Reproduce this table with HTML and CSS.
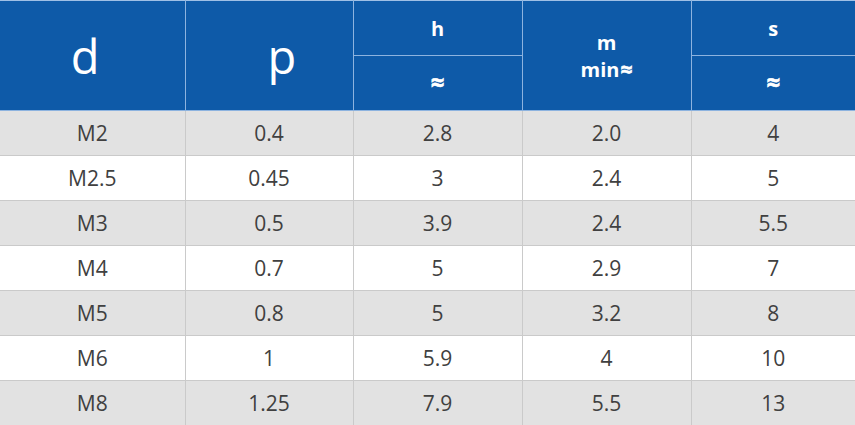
FILE: index.html
```html
<!DOCTYPE html>
<html>
<head>
<meta charset="utf-8">
<link rel="stylesheet" href="styles.css">
</head>
<body>
<table class="spec">
  <colgroup>
    <col class="c1"><col class="c2"><col class="c3"><col class="c4"><col class="c5">
  </colgroup>
  <thead>
    <tr class="h1">
      <th rowspan="2" class="big big-d">d</th>
      <th rowspan="2" class="big big-p">p</th>
      <th>h</th>
      <th rowspan="2" class="two">m<br>min<span class="approx small">≈</span></th>
      <th>s</th>
    </tr>
    <tr class="h2">
      <th><span class="approx">≈</span></th>
      <th><span class="approx">≈</span></th>
    </tr>
  </thead>
  <tbody>
    <tr class="odd"><td>M2</td><td>0.4</td><td>2.8</td><td>2.0</td><td>4</td></tr>
    <tr><td>M2.5</td><td>0.45</td><td>3</td><td>2.4</td><td>5</td></tr>
    <tr class="odd"><td>M3</td><td>0.5</td><td>3.9</td><td>2.4</td><td>5.5</td></tr>
    <tr><td>M4</td><td>0.7</td><td>5</td><td>2.9</td><td>7</td></tr>
    <tr class="odd"><td>M5</td><td>0.8</td><td>5</td><td>3.2</td><td>8</td></tr>
    <tr><td>M6</td><td>1</td><td>5.9</td><td>4</td><td>10</td></tr>
    <tr class="odd"><td>M8</td><td>1.25</td><td>7.9</td><td>5.5</td><td>13</td></tr>
  </tbody>
</table>
</body>
</html>
```
FILE: styles.css
```css
html, body {
  margin: 0;
  padding: 0;
  background: #ffffff;
}
.spec {
  width: 855px;
  border-collapse: collapse;
  table-layout: fixed;
  font-family: "Open Sans", "Liberation Sans", sans-serif;
}
.c1 { width: 185px; }
.c2 { width: 168px; }
.c3 { width: 169px; }
.c4 { width: 169px; }
.c5 { width: 164px; }
.spec th {
  background: #0e5aa8;
  color: #ffffff;
  font-weight: 700;
  font-size: 20px;
  border: 1px solid #8db3df;
  padding: 0;
  text-align: center;
  vertical-align: middle;
  height: 54px;
  line-height: 27px;
}
.spec thead tr.h1 th { border-top: 1px solid #9fc0e6; }
.spec th:first-child { border-left: none; }
.spec tr.h1 th:last-child { border-right: none; }
.spec tr.h2 th:last-child { border-right: none; }
.spec th.big {
  font-size: 47px;
  font-weight: 400;
  line-height: 46px;
}
.spec th.big-d { padding-right: 14px; }
.spec th.big-p { padding-left: 26px; }
.approx {
  font-size: 24px;
  line-height: 20px;
  -webkit-text-stroke: 0.6px #ffffff;
}
.approx.small {
  font-size: 21px;
  margin-left: 1px;
}
.spec td {
  height: 44px;
  padding: 0;
  text-align: center;
  vertical-align: middle;
  font-size: 21px;
  color: #404040;
  border: 1px solid #cacaca;
  background: #ffffff;
}
.spec td:first-child { border-left: none; }
.spec td:last-child { border-right: none; }
.spec tr.odd td { background: #e2e2e2; }
```
